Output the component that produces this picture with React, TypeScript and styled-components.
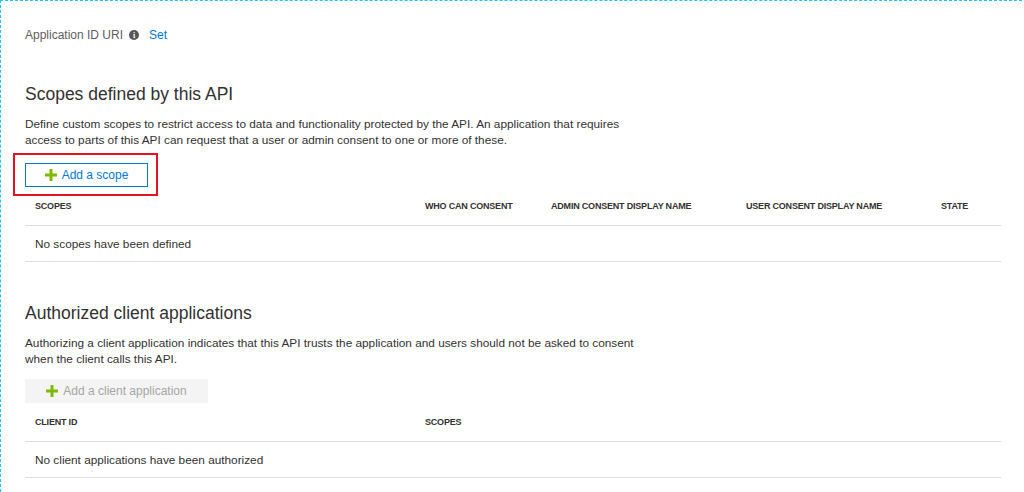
import React from "react";
import styled, { createGlobalStyle } from "styled-components";

const Global = createGlobalStyle`
  html, body { margin: 0; padding: 0; background: #fff; }
  body { font-family: "Segoe UI", "Liberation Sans", Arial, sans-serif; color: #323130; }
`;

const Page = styled.div`
  width: 1022px;
  height: 492px;
  box-sizing: border-box;
  border-top: 1px dashed #1ec1f0;
  border-left: 1px dashed #1ec1f0;
  padding: 26px 0 0 24px;
`;

const Content = styled.div`
  width: 976px;
  display: flex;
  flex-direction: column;
`;

const UriRow = styled.div`
  display: flex;
  align-items: center;
  gap: 6px;
  font-size: 12px;
  color: #605e5c;
  height: 16px;
`;

const InfoDot = styled.span`
  width: 10px; height: 10px; border-radius: 50%;
  background: #555; color: #fff; font-size: 8px; font-weight: bold;
  display: inline-flex; align-items: center; justify-content: center;
  font-family: "Liberation Serif", serif;
`;

const Link = styled.span`
  color: #0078d4;
  margin-left: 4px;
`;

const Heading = styled.h2<{ $top: number }>`
  margin: ${p => p.$top}px 0 0;
  font-size: 17.5px;
  font-weight: normal;
  color: #323130;
  line-height: 22px;
`;

const Desc = styled.p`
  margin: 11px 0 0;
  font-size: 11.8px;
  line-height: 16px;
  color: #323130;
  white-space: nowrap;
`;

const Highlight = styled.div`
  margin: 5px 0 0 -12px;
  width: 145px;
  height: 43px;
  border: 2px solid #e81123;
  box-sizing: border-box;
  display: flex;
  align-items: center;
  padding-left: 10px;
`;

const Button = styled.div<{ $disabled?: boolean }>`
  display: flex;
  align-items: center;
  justify-content: center;
  gap: 5px;
  height: 24px;
  box-sizing: border-box;
  font-size: 12px;
  ${p => p.$disabled
    ? `width: 183px; background: #f4f4f4; color: #a6a6a6; margin-top: 12px;`
    : `width: 123px; border: 1px solid #0078d4; color: #0078d4; background: #fff;`}
`;

const Plus = () => (
  <svg width="12" height="12" viewBox="0 0 12 12">
    <path d="M4.5 0h3v4.5H12v3H7.5V12h-3V7.5H0v-3h4.5z" fill="#7fba00" />
  </svg>
);

const HeaderRow = styled.div<{ $cols: string; $top?: number }>`
  display: grid;
  grid-template-columns: ${p => p.$cols};
  margin-top: ${p => p.$top ?? 0}px;
  padding-left: 10px;
  height: 38px;
  align-items: center;
  border-bottom: 1px solid #e1dfdd;
  font-size: 9px;
  font-weight: bold;
  letter-spacing: -0.2px;
  color: #323130;
`;

const BodyRow = styled.div`
  height: 35px;
  display: flex;
  align-items: center;
  padding-left: 10px;
  border-bottom: 1px solid #e1dfdd;
  font-size: 11.8px;
  color: #323130;
`;

export default function App() {
  const scopeCols = "390px 126px 195px 195px 1fr";
  return (
    <>
      <Global />
      <Page>
        <Content>
          <UriRow>
            Application ID URI <InfoDot>i</InfoDot> <Link>Set</Link>
          </UriRow>
          <Heading $top={40}>Scopes defined by this API</Heading>
          <Desc>
            Define custom scopes to restrict access to data and functionality protected by the API. An application that requires
            <br />
            access to parts of this API can request that a user or admin consent to one or more of these.
          </Desc>
          <Highlight>
            <Button><Plus />Add a scope</Button>
          </Highlight>
          <HeaderRow $cols={scopeCols} $top={-9}>
            <span>SCOPES</span>
            <span>WHO CAN CONSENT</span>
            <span>ADMIN CONSENT DISPLAY NAME</span>
            <span>USER CONSENT DISPLAY NAME</span>
            <span>STATE</span>
          </HeaderRow>
          <BodyRow>No scopes have been defined</BodyRow>
          <Heading $top={40}>Authorized client applications</Heading>
          <Desc>
            Authorizing a client application indicates that this API trusts the application and users should not be asked to consent
            <br />
            when the client calls this API.
          </Desc>
          <Button $disabled><Plus />Add a client application</Button>
          <HeaderRow $cols="390px 1fr">
            <span>CLIENT ID</span>
            <span>SCOPES</span>
          </HeaderRow>
          <BodyRow>No client applications have been authorized</BodyRow>
        </Content>
      </Page>
    </>
  );
}
